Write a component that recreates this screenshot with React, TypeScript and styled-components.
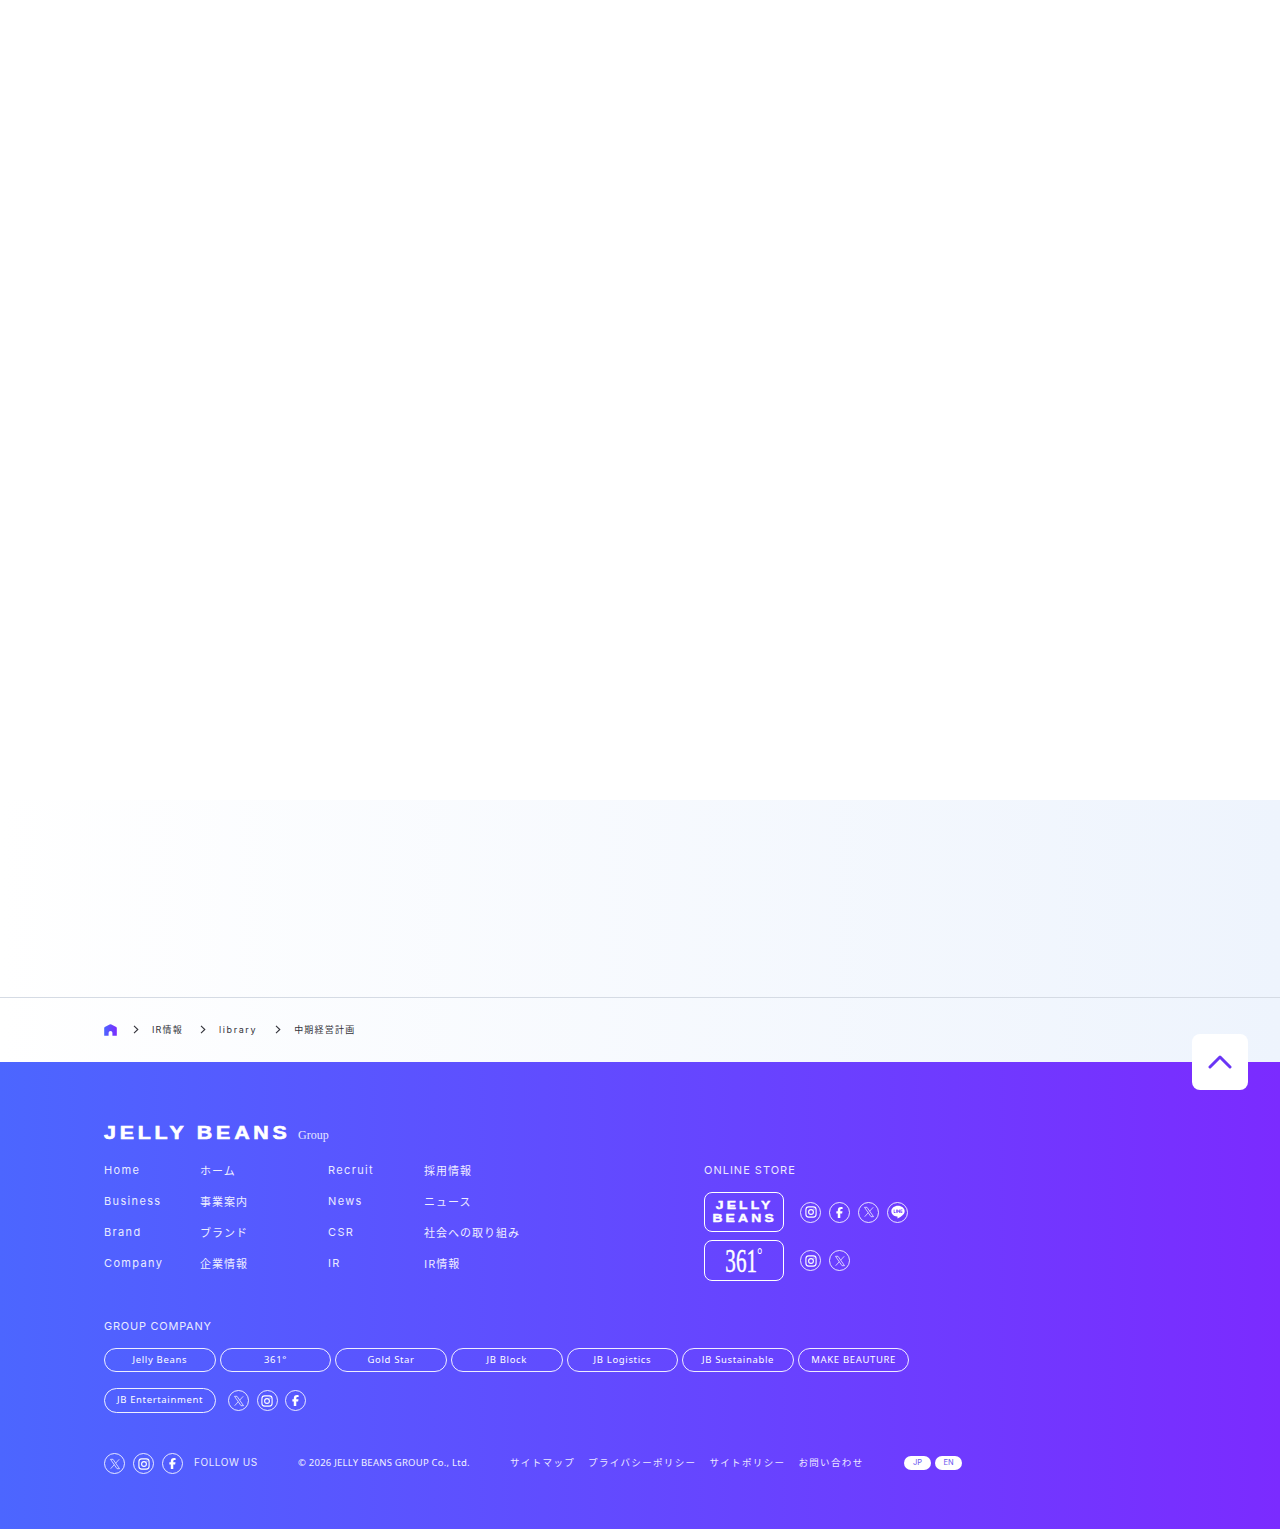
import React from "react";
import styled, { createGlobalStyle } from "styled-components";
import { FaFacebookF } from "react-icons/fa6";
import { RiLineFill } from "react-icons/ri";

const GlobalStyle = createGlobalStyle`
  html, body { margin: 0; padding: 0; background: #fff; }
  body { font-family: Inter, "Noto Sans CJK JP", sans-serif; }
  a { color: inherit; text-decoration: none; }
`;

const JP = `"Noto Sans CJK JP", sans-serif`;

const Blank = styled.div`
  height: 800px;
  background: #fff;
`;

const Band = styled.div`
  background: linear-gradient(90deg, #ffffff 0%, #eef4fd 100%);
`;

const BandSpace = styled.div`
  height: 197px;
  border-bottom: 1px solid #d5dbe4;
`;

const Crumbs = styled.nav`
  height: 64px;
  box-sizing: border-box;
  padding: 0 0 2px 104px;
  display: flex;
  align-items: center;
  font-size: 9px;
  color: #33333a;
`;

const CrumbText = styled.a<{ $gap: number; $track: number }>`
  font-family: Inter, ${JP};
  letter-spacing: ${({ $track }) => $track}px;
  margin-right: ${({ $gap }) => $gap}px;
`;

const CrumbArrow = styled.svg`
  width: 6px;
  height: 9px;
  margin-right: 13px;
  flex: none;
`;

const HomeIcon = styled.svg`
  width: 13px;
  height: 12px;
  margin-right: 16px;
  flex: none;
  position: relative;
  top: 1px;
`;

const Footer = styled.footer`
  position: relative;
  height: 467px;
  box-sizing: border-box;
  padding: 62px 0 0 104px;
  background: linear-gradient(90deg, #4c66ff 0%, #7b2bff 100%);
  color: #fff;
  overflow: visible;
`;

const PageTop = styled.a`
  position: absolute;
  top: -28px;
  right: 32px;
  width: 56px;
  height: 56px;
  box-sizing: border-box;
  padding-bottom: 2px;
  border-radius: 8px;
  background: #fff;
  display: flex;
  align-items: center;
  justify-content: center;
`;

const LogoRow = styled.div`
  display: flex;
  align-items: flex-end;
  height: 20px;
`;

const LogoMark = styled.div`
  font-family: "Liberation Sans", sans-serif;
  font-weight: 700;
  font-size: 18px;
  line-height: 20px;
  letter-spacing: 3.2px;
  -webkit-text-stroke: 0.6px #fff;
  width: 194px;
  margin-bottom: 1px;
  white-space: nowrap;
  transform: scaleX(1.187);
  transform-origin: left center;
`;

const LogoGroup = styled.span`
  font-family: "Liberation Serif", serif;
  font-size: 12px;
  line-height: 18px;
  opacity: 0.85;
`;

const Upper = styled.div`
  display: flex;
  margin-top: 17px;
  height: 156px;
`;

const NavGrid = styled.div`
  width: 600px;
  display: grid;
  grid-template-columns: 96px 128px 96px 1fr;
  grid-auto-rows: 31px;
  align-content: start;
`;

const NavEn = styled.a`
  font-size: 11px;
  line-height: 18px;
  letter-spacing: 1.35px;
  opacity: 0.88;
`;

const NavJa = styled.a`
  font-family: ${JP};
  font-size: 11px;
  line-height: 19px;
  letter-spacing: 1px;
  opacity: 0.9;
`;

const Store = styled.div`
  display: flex;
  flex-direction: column;
`;

const Heading = styled.div`
  font-size: 11px;
  line-height: 18px;
  letter-spacing: 0.75px;
  opacity: 0.88;
`;

const StoreHeading = styled(Heading)`
  letter-spacing: 1px;
`;

const StoreRow = styled.div`
  display: flex;
  align-items: center;
  gap: 16px;
  margin-top: 8px;
`;

const StoreFirst = styled(StoreRow)`
  margin-top: 13px;
`;

const StoreBox = styled.a<{ $tall?: boolean }>`
  width: 80px;
  height: ${({ $tall }) => ($tall ? 41 : 40)}px;
  box-sizing: border-box;
  border: 1px solid #fff;
  border-radius: 8px;
  display: flex;
  align-items: center;
  justify-content: center;
  text-align: center;
`;

const StoreLogo = styled.span`
  font-family: "Liberation Sans", sans-serif;
  font-weight: 700;
  font-size: 11.5px;
  line-height: 13px;
  letter-spacing: 2.6px;
  margin-right: -2px;
  -webkit-text-stroke: 0.4px #fff;
  transform: scaleX(1.21);
`;

const Logo361 = styled.span`
  font-family: "Liberation Serif", serif;
  font-size: 34px;
  line-height: 36px;
  display: inline-block;
  transform: scaleX(0.62);
  margin-top: 1px;
  -webkit-text-stroke: 0.5px #fff;
`;

const Degree = styled.sup`
  font-size: 22px;
  line-height: 0;
  vertical-align: 10px;
  -webkit-text-stroke: 0;
`;

const Icons = styled.div<{ $gap?: number }>`
  display: flex;
  gap: ${({ $gap }) => $gap ?? 8}px;
`;

const IconRing = styled.a`
  width: 21px;
  height: 21px;
  box-sizing: border-box;
  border: 1px solid rgba(255, 255, 255, 0.85);
  border-radius: 50%;
  display: flex;
  align-items: center;
  justify-content: center;
  font-size: 12px;
  color: #fff;
`;

const Pills = styled.div`
  display: flex;
  gap: 4px;
  margin-top: 13px;
  width: 805.5px;
`;

const Pill = styled.a`
  flex: 1 1 0;
  height: 24px;
  box-sizing: border-box;
  padding-bottom: 2px;
  border: 1px solid rgba(255, 255, 255, 0.9);
  border-radius: 12px;
  display: flex;
  align-items: center;
  justify-content: center;
  font-family: "Noto Sans", sans-serif;
  font-size: 9.5px;
  letter-spacing: 0.65px;
  white-space: nowrap;
`;

const PillRow = styled.div`
  display: flex;
  align-items: center;
  gap: 12px;
  margin-top: 16px;
`;

const SoloPill = styled(Pill)`
  flex: none;
  width: 112px;
  height: 25px;
  border-radius: 13px;
`;

const Bottom = styled.div`
  display: flex;
  align-items: center;
  margin-top: 40px;
  height: 21px;
`;

const FollowLabel = styled.span`
  font-size: 10px;
  letter-spacing: 0.55px;
  margin: 0 0 4px 11px;
  width: 104px;
  opacity: 0.88;
`;

const Copy = styled.span`
  font-family: "Noto Sans", sans-serif;
  font-size: 9.5px;
  letter-spacing: 0.23px;
  width: 212px;
  margin-bottom: 3px;
  opacity: 0.92;
`;

const Legal = styled.div`
  display: flex;
  gap: 13px;
  width: 394px;
  margin-bottom: 4px;
`;

const LegalLink = styled.a`
  font-family: ${JP};
  font-size: 9.5px;
  letter-spacing: 1.35px;
  opacity: 0.88;
`;

const Lang = styled.div`
  display: flex;
  gap: 4px;
  margin-bottom: 2px;
`;

const LangBtn = styled.a`
  width: 27px;
  height: 14px;
  border-radius: 7px;
  background: #fff;
  color: #6a55f0;
  font-size: 7.5px;
  line-height: 14px;
  text-align: center;
`;

const InstagramGlyph = () => (
  <svg width="12" height="12" viewBox="0 0 12 12" fill="none" stroke="#fff">
    <rect x="0.9" y="0.9" width="10.2" height="10.2" rx="2.8" strokeWidth="1.1" />
    <circle cx="6" cy="6" r="2.4" strokeWidth="1.1" />
    <circle cx="9" cy="3" r="0.6" fill="#fff" stroke="none" />
  </svg>
);

const XGlyph = () => (
  <svg width="12" height="12" viewBox="0 0 12 12" fill="none" stroke="#fff" strokeWidth="0.7">
    <path d="M1.5 1.3 H4 L10.5 10.7 H8 Z" />
    <path d="M10.2 1.3 L6.5 5.3 M5.3 6.7 L1.7 10.7" />
  </svg>
);

type SocialKind = "x" | "instagram" | "facebook" | "line";

const Social = ({ kind }: { kind: SocialKind }) => (
  <IconRing href="#">
    {kind === "x" && <XGlyph />}
    {kind === "instagram" && <InstagramGlyph />}
    {kind === "facebook" && <FaFacebookF size={11} />}
    {kind === "line" && <RiLineFill size={16} />}
  </IconRing>
);

const navRows = [
  ["Home", "ホーム", "Recruit", "採用情報"],
  ["Business", "事業案内", "News", "ニュース"],
  ["Brand", "ブランド", "CSR", "社会への取り組み"],
  ["Company", "企業情報", "IR", "IR情報"],
];

const companies = [
  "Jelly Beans",
  "361°",
  "Gold Star",
  "JB Block",
  "JB Logistics",
  "JB Sustainable",
  "MAKE BEAUTURE",
];

const legal = ["サイトマップ", "プライバシーポリシー", "サイトポリシー", "お問い合わせ"];

const Arrow = () => (
  <CrumbArrow viewBox="0 0 6 9" fill="none" stroke="#33333a" strokeWidth="1.1">
    <path d="M1 0.8 L4.8 4.5 L1 8.2" />
  </CrumbArrow>
);

export default function App() {
  return (
    <>
      <GlobalStyle />
      <Blank />
      <Band>
        <BandSpace />
        <Crumbs>
          <HomeIcon viewBox="0 0 13 13" preserveAspectRatio="none">
            <defs>
              <linearGradient id="home" x1="0" y1="0" x2="1" y2="0">
                <stop offset="0" stopColor="#4c66ff" />
                <stop offset="1" stopColor="#7b2bff" />
              </linearGradient>
            </defs>
            <path
              d="M5.6 0.6 Q6.5 0.1 7.4 0.6 L12.2 3.2 Q12.8 3.6 12.8 4.2 V12.8 H8.4 V9.6 A1.9 1.9 0 0 0 4.6 9.6 V12.8 H0.2 V4.2 Q0.2 3.6 0.8 3.2 Z"
              fill="url(#home)"
            />
          </HomeIcon>
          <Arrow />
          <CrumbText $gap={17} $track={1.2}>IR情報</CrumbText>
          <Arrow />
          <CrumbText $gap={18} $track={1.6}>library</CrumbText>
          <Arrow />
          <CrumbText $gap={0} $track={1.2}>中期経営計画</CrumbText>
        </Crumbs>
      </Band>
      <Footer>
        <PageTop href="#">
          <svg width="24" height="15" viewBox="0 0 24 15" fill="none" stroke="#6a35f5" strokeWidth="3" strokeLinecap="round" strokeLinejoin="round">
            <path d="M2 13 L12 3 L22 13" />
          </svg>
        </PageTop>
        <LogoRow>
          <LogoMark>JELLY BEANS</LogoMark>
          <LogoGroup>Group</LogoGroup>
        </LogoRow>
        <Upper>
          <NavGrid>
            {navRows.map((row) => (
              <React.Fragment key={row[0]}>
                <NavEn href="#">{row[0]}</NavEn>
                <NavJa href="#">{row[1]}</NavJa>
                <NavEn href="#">{row[2]}</NavEn>
                <NavJa href="#">{row[3]}</NavJa>
              </React.Fragment>
            ))}
          </NavGrid>
          <Store>
            <StoreHeading>ONLINE STORE</StoreHeading>
            <StoreFirst>
              <StoreBox href="#">
                <StoreLogo>
                  JELLY
                  <br />
                  BEANS
                </StoreLogo>
              </StoreBox>
              <Icons>
                <Social kind="instagram" />
                <Social kind="facebook" />
                <Social kind="x" />
                <Social kind="line" />
              </Icons>
            </StoreFirst>
            <StoreRow>
              <StoreBox href="#" $tall>
                <Logo361>
                  361<Degree>°</Degree>
                </Logo361>
              </StoreBox>
              <Icons>
                <Social kind="instagram" />
                <Social kind="x" />
              </Icons>
            </StoreRow>
          </Store>
        </Upper>
        <Heading>GROUP COMPANY</Heading>
        <Pills>
          {companies.map((name) => (
            <Pill href="#" key={name}>
              {name}
            </Pill>
          ))}
        </Pills>
        <PillRow>
          <SoloPill href="#">JB Entertainment</SoloPill>
          <Icons $gap={7.6}>
            <Social kind="x" />
            <Social kind="instagram" />
            <Social kind="facebook" />
          </Icons>
        </PillRow>
        <Bottom>
          <Icons>
            <Social kind="x" />
            <Social kind="instagram" />
            <Social kind="facebook" />
          </Icons>
          <FollowLabel>FOLLOW US</FollowLabel>
          <Copy>© 2026 JELLY BEANS GROUP Co., Ltd.</Copy>
          <Legal>
            {legal.map((item) => (
              <LegalLink href="#" key={item}>
                {item}
              </LegalLink>
            ))}
          </Legal>
          <Lang>
            <LangBtn href="#">JP</LangBtn>
            <LangBtn href="#">EN</LangBtn>
          </Lang>
        </Bottom>
      </Footer>
    </>
  );
}
